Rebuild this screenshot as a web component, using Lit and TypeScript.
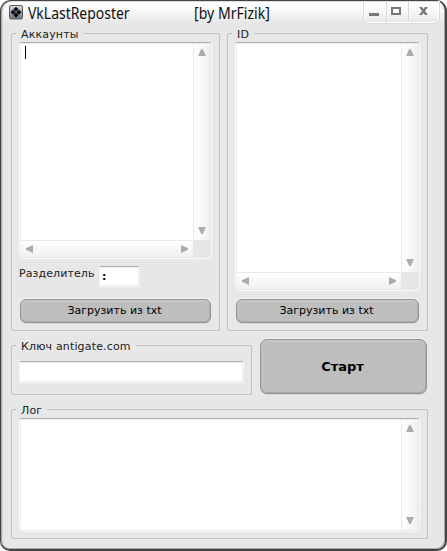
import { LitElement, html, css } from "lit";
import { customElement, property } from "lit/decorators.js";

@customElement("group-box")
class GroupBox extends LitElement {
  @property() label = "";
  static styles = css`
    :host { display: block; box-sizing: border-box; border: 1px solid #c2c2c2; border-radius: 2px; padding: 0 8px 0 7px; }
    .label { display: block; width: max-content; height: 14px; margin: -7px 0 1px -3px; padding: 0 5px 0 5px;
      background: #e7e7e7; font: 11px/16px "DejaVu Sans", sans-serif; letter-spacing: .16px; color: #222; white-space: nowrap; }
  `;
  render() {
    return html`<span class="label">${this.label}</span><slot></slot>`;
  }
}

@customElement("scroll-area")
class ScrollArea extends LitElement {
  @property({ type: Boolean }) horizontal = false;
  @property({ type: Boolean }) caret = false;
  static styles = css`
    :host { display: block; box-sizing: border-box; border: 1px solid #fafafa; border-top-color: #acacac;
      border-radius: 3px 3px 5px 5px; background: #e7e7e7; padding: 0 1px 1px 0; }
    .grid { display: grid; grid-template-columns: 1fr 17px; grid-template-rows: 1fr; height: 100%; box-sizing: border-box;
      border-left: 1px solid #ececec; border-top: 1px solid #ececec; }
    .both { grid-template-rows: 1fr 17px; }
    .text { background: #fff; padding: 2px 4px; }
    .caret { width: 1px; height: 13px; background: #000; }
    .v, .h { box-sizing: border-box; display: flex; justify-content: space-between; align-items: center; }
    .v { flex-direction: column; border-left: 1px solid #e9e9e9; background: linear-gradient(90deg, #fff, #f0f0f0); padding: 5px 0 6px; }
    .h { border-top: 1px solid #e9e9e9; background: linear-gradient(#fff, #f0f0f0); padding: 0 5px 1px 5px; }
    svg { display: block; fill: #acacac; }
  `;
  render() {
    return html`<div class="grid ${this.horizontal ? "both" : ""}">
      <div class="text">${this.caret ? html`<div class="caret"></div>` : null}</div>
      <div class="v">
        <svg width="8" height="7"><path d="M3.3 0h1.4L8 7H0z"/></svg>
        <svg width="8" height="7"><path d="M0 0h8L4.7 7H3.3z"/></svg>
      </div>
      ${this.horizontal ? html`<div class="h">
        <svg width="7" height="8"><path d="M7 0v8L0 4.7V3.3z"/></svg>
        <svg width="7" height="8"><path d="M0 0l7 3.3v1.4L0 8z"/></svg>
      </div>` : null}
    </div>`;
  }
}

@customElement("app-root")
class AppRoot extends LitElement {
  static styles = css`
    :host { display: block; width: 447px; height: 551px; overflow: hidden; background: #fff; font: 11px "DejaVu Sans", sans-serif; color: #1c1c1c; }
    * { box-sizing: border-box; }
    .window { width: 447px; height: 551px; border: solid #444; border-width: 1px 2px 2px 1px; border-radius: 11px 11px 10px 10px;
      background: linear-gradient(#fff 0, #f8f8f8 10px, #e7e7e7 22px, #e7e7e7 100%);
      box-shadow: inset 1px 0 #a8a8a8, inset 2px 0 #d3d3d3, inset -1px -1px #a8a8a8, inset 0 1px #dcdcdc; }
    .title { display: flex; height: 32px; padding-left: 8px; }
    .logo { display: block; margin-top: 4px; width: 14px; height: 15px; }
    .name, .author { font: 15.5px/22px "Noto Sans", sans-serif; color: #111; white-space: pre; transform-origin: 0 50%; }
    .name { margin: 1px 0 0 5px; width: 166px; transform: scaleX(.9); }
    .author { margin-top: 1px; width: 170px; transform: scaleX(.91); }
    .controls { display: flex; width: 75px; height: 22px; border: 1px solid #fdfdfd; border-top: 0; border-radius: 0 0 5px 5px;
      box-shadow: 0 0 0 1px #dadada; clip-path: inset(0 -2px -2px -2px); }
    .controls svg { display: block; width: 22px; height: 20px; border-right: 1px solid #d8d8d8; box-shadow: 1px 0 #fafafa; }
    .controls svg:last-child { width: 29px; border: 0; box-shadow: none; }
    .body { padding: 0 0 0 10px; width: 428px; }
    .row { display: flex; }
    .accounts { width: 209px; height: 298px; }
    .ids { width: 201px; height: 298px; margin-left: 7px; }
    .accounts-text { height: 217px; width: 193px; }
    .ids-text { height: 249px; width: 185px; }
    .sep { display: flex; height: 32px; padding-top: 7px; }
    .sep-label { width: 80px; line-height: 15px; letter-spacing: .1px; }
    .input { background: #fff; border: 1px solid #f5f5f5; border-top-color: #acacac; border-radius: 2px;
      box-shadow: inset 0 1px #ededed, inset -1px -1px #e9e9e9; }
    .sep-input { width: 41px; height: 21px; padding-left: 2px; color: #000; font-weight: bold; line-height: 19px; }
    .button { display: flex; align-items: center; justify-content: center; color: #000; height: 24px; border: 1px solid #939393;
      border-radius: 6px; background: #bebebe; box-shadow: inset 0 2px 1px #cdcdcd99, inset 0 -1px #a9a9a9, inset -1px 0 #aaa, 0 -1px #f6f6f6, 0 1px #d8d8d8; padding: 0 2px 1px 0; }
    .accounts-button { margin: 8px 0 0 1px; width: 191px; }
    .ids-button { margin: 8px 0 0 1px; width: 183px; }
    .key-row { margin-top: 14px; }
    .key { width: 241px; height: 50px; }
    .key-input { width: 225px; height: 22px; margin-top: 8px; }
    .start { width: 167px; height: 55px; margin: -6px 0 0 8px; font: bold 13px "DejaVu Sans", sans-serif; border-radius: 7px; }
    .log { width: 417px; height: 130px; margin-top: 14px; }
    .log-text { width: 401px; height: 114px; }
  `;
  render() {
    return html`<div class="window">
      <div class="title">
        <svg class="logo" viewBox="0 0 14 15">
          <defs><linearGradient id="tile" x2="0" y2="1"><stop stop-color="#d5d9e0"/><stop offset="1" stop-color="#6e747f"/></linearGradient></defs>
          <rect x=".5" y=".5" width="13" height="13.5" rx="1.5" fill="url(#tile)" stroke="#565c66"/>
          <path d="M7 2L9.3 4.3 7 6.6 4.7 4.3zM4.1 4.9L6.4 7.2 4.1 9.5 1.8 7.2zM9.9 4.9l2.3 2.3-2.3 2.3-2.3-2.3zM7 7.8l2.3 2.3L7 12.4l-2.3-2.3z" fill="#08080c" stroke="#08080c" stroke-width=".5"/>
        </svg>
        <div class="name">VkLastReposter</div><div class="author">[by MrFizik]</div>
        <div class="controls">
          <svg><path d="M4 12h10v3H4z" fill="#777"/></svg>
          <svg><path d="M5 7h8v6H5z" fill="none" stroke="#777" stroke-width="2"/></svg>
          <svg><path d="M10 6h3l1.5 2L16 6h3l-3 4 3 4h-3l-1.5-2-1.5 2h-3l3-4z" fill="#777"/></svg>
        </div>
      </div>
      <div class="body">
        <div class="row">
          <group-box class="accounts" label="Аккаунты">
            <scroll-area class="accounts-text" horizontal caret></scroll-area>
            <div class="sep"><span class="sep-label">Разделитель</span><div class="input sep-input">:</div></div>
            <div class="button accounts-button">Загрузить из txt</div>
          </group-box>
          <group-box class="ids" label="ID">
            <scroll-area class="ids-text" horizontal></scroll-area>
            <div class="button ids-button">Загрузить из txt</div>
          </group-box>
        </div>
        <div class="row key-row">
          <group-box class="key" label="Ключ antigate.com"><div class="input key-input"></div></group-box>
          <div class="button start">Старт</div>
        </div>
        <group-box class="log" label="Лог"><scroll-area class="log-text"></scroll-area></group-box>
      </div>
    </div>`;
  }
}
